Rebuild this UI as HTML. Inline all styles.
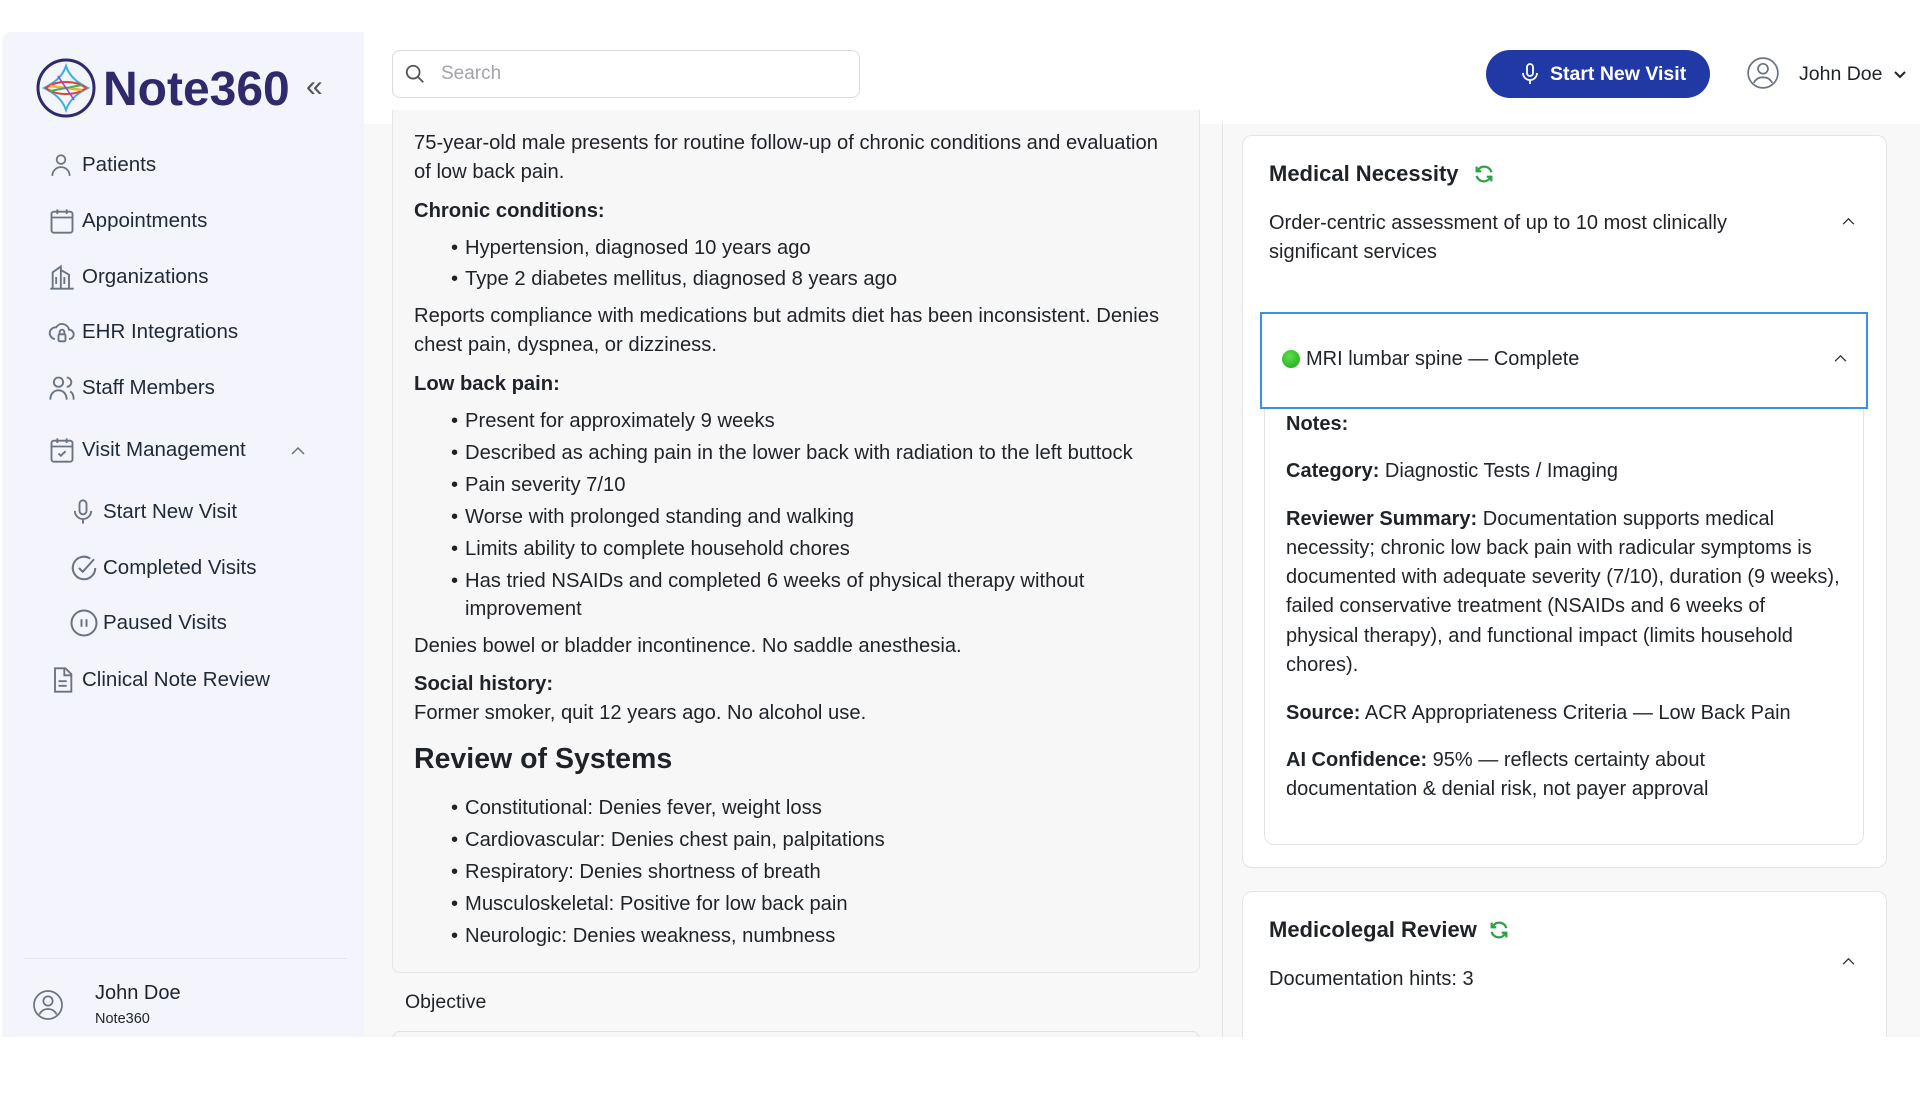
<!DOCTYPE html>
<html><head><meta charset="utf-8"><style>
*{box-sizing:border-box;margin:0;padding:0}
body{width:1920px;height:1098px;background:#fff;font-family:"Liberation Sans",sans-serif;color:#1f2328;position:relative;overflow:hidden}
.abs{position:absolute}
.side{left:2px;top:32px;width:362px;height:1005px;background:#f3f4fc;border-radius:10px 0 0 0}
.nav{position:absolute;font-size:20.5px;color:#1f2937;display:flex;align-items:center}
.nav svg{position:absolute;left:-34px}
.content{left:364px;top:122px;width:1556px;height:915px;background:#f8f8f9}
.mid{left:392px;top:110px;width:808px;height:863px;background:#f7f7f8;border:1px solid #e6e6e9;border-top:none;border-radius:0 0 8px 8px}
.t{position:absolute;font-size:20.2px;line-height:29px;white-space:nowrap}
.b{font-weight:bold}
.li{position:absolute;font-size:20.2px;white-space:nowrap;left:465px}
.li:before{content:"•";position:absolute;left:-14px}
.card{position:absolute;background:#fff;border:1px solid #e4e4e8;border-radius:10px}
.rt{position:absolute;font-size:20px;white-space:nowrap;left:1286px}
</style></head><body>
<div class="abs side"></div>
<div class="abs content"></div>
<div class="abs" style="left:364px;top:32px;width:1556px;height:92px;background:#fff"></div>
<svg class="abs" style="left:36px;top:58px" width="60" height="60" viewBox="0 0 60 60">
<circle cx="30" cy="30" r="28" fill="none" stroke="#2e2a6b" stroke-width="3"/>
<path d="M30 8 C34 20 44 26 52 30 C44 34 34 40 30 52 C26 40 16 34 8 30 C16 26 26 20 30 8Z" fill="none" stroke="#3ab0e0" stroke-width="2"/>
<path d="M10 30 C20 22 40 22 50 30 C40 38 20 38 10 30Z" fill="none" stroke="#e0403a" stroke-width="2"/>
<path d="M14 28 L46 32" stroke="#f0b030" stroke-width="2.5"/>
<path d="M14 33 L46 27" stroke="#40b060" stroke-width="2"/>
<path d="M22 18 C28 28 32 32 38 42" stroke="#a040c0" stroke-width="1.5" fill="none"/>
</svg>
<div class="abs" style="left:103px;top:62px;font-size:48px;font-weight:bold;color:#2e2a6b;letter-spacing:0px">Note360</div>
<div class="abs" style="left:306px;top:72px;font-size:30px;color:#555;line-height:30px">«</div>
<div class="nav" style="left:82px;top:153px">
<svg width="26" height="26" viewBox="0 0 24 24" fill="none" stroke="#6b7280" stroke-width="1.6"><circle cx="12" cy="7" r="4"/><path d="M4 22c0-5 4-8 8-8s8 3 8 8"/></svg>Patients</div>
<div class="nav" style="left:82px;top:209px">
<svg width="28" height="28" viewBox="0 0 24 24" fill="none" stroke="#6b7280" stroke-width="1.6"><rect x="3" y="4" width="18" height="18" rx="2"/><path d="M3 9h18M8 2v4M16 2v4"/></svg>Appointments</div>
<div class="nav" style="left:82px;top:265px">
<svg width="28" height="28" viewBox="0 0 24 24" fill="none" stroke="#6b7280" stroke-width="1.6"><path d="M4 22V8l7-5v19M11 22V6l7 4v12M2 22h20M7 12v6M14 12v6"/></svg>Organizations</div>
<div class="nav" style="left:82px;top:320px">
<svg width="28" height="28" viewBox="0 0 24 24" fill="none" stroke="#6b7280" stroke-width="1.6"><path d="M6 18a5 5 0 0 1 1-10 6 6 0 0 1 11 2 4 4 0 0 1 0 8"/><rect x="9" y="14" width="6" height="6" rx="1"/><path d="M10 14v-2a2 2 0 0 1 4 0v2"/></svg>EHR Integrations</div>
<div class="nav" style="left:82px;top:376px">
<svg width="28" height="28" viewBox="0 0 24 24" fill="none" stroke="#6b7280" stroke-width="1.6"><circle cx="9" cy="7" r="4"/><path d="M2 22c0-5 3-8 7-8s7 3 7 8M16 3a4 4 0 0 1 0 8M19 15c2 1 3 4 3 7"/></svg>Staff Members</div>
<div class="nav" style="left:82px;top:438px">
<svg width="28" height="28" viewBox="0 0 24 24" fill="none" stroke="#6b7280" stroke-width="1.6"><rect x="3" y="4" width="18" height="18" rx="2"/><path d="M3 9h18M8 2v4M16 2v4M9 15l2 2 4-4"/></svg>Visit Management</div>
<svg class="abs" style="left:291px;top:446px" width="14" height="10" viewBox="0 0 14 10" fill="none" stroke="#6b7280" stroke-width="1.5"><path d="M1 8l6-6 6 6"/></svg>
<div class="nav" style="left:103px;top:500px">
<svg width="28" height="28" viewBox="0 0 24 24" fill="none" stroke="#6b7280" stroke-width="1.6"><rect x="9" y="2" width="6" height="12" rx="3"/><path d="M5 11a7 7 0 0 0 14 0M12 18v4"/></svg>Start New Visit</div>
<div class="nav" style="left:103px;top:556px">
<svg width="30" height="30" viewBox="0 0 24 24" fill="none" stroke="#6b7280" stroke-width="1.6"><path d="M21 12a9 9 0 1 1-4-7.5"/><path d="M8 12l3 3 9-10"/></svg>Completed Visits</div>
<div class="nav" style="left:103px;top:611px">
<svg width="30" height="30" viewBox="0 0 24 24" fill="none" stroke="#6b7280" stroke-width="1.6"><circle cx="12" cy="12" r="10"/><path d="M10 9v6M14 9v6"/></svg>Paused Visits</div>
<div class="nav" style="left:82px;top:668px">
<svg width="28" height="28" viewBox="0 0 24 24" fill="none" stroke="#6b7280" stroke-width="1.6"><path d="M6 2h9l5 5v15H6z"/><path d="M14 2v6h6M9 13h7M9 17h7"/></svg>Clinical Note Review</div>
<div class="abs" style="left:24px;top:958px;width:323px;height:1px;background:#e4e5ee"></div>
<svg class="abs" style="left:32px;top:989px" width="32" height="32" viewBox="0 0 24 24" fill="none" stroke="#6b7280" stroke-width="1.3"><circle cx="12" cy="12" r="10.5"/><circle cx="12" cy="9" r="3.5"/><path d="M5.5 19c1.5-3 4-4 6.5-4s5 1 6.5 4"/></svg>
<div class="abs" style="left:95px;top:982px;font-size:20px">John Doe</div>
<div class="abs" style="left:95px;top:1011px;font-size:14.5px">Note360</div>
<div class="abs" style="left:392px;top:50px;width:468px;height:48px;border:1.5px solid #d8d9de;border-radius:8px;background:#fff"></div>
<svg class="abs" style="left:404px;top:63px" width="22" height="22" viewBox="0 0 24 24" fill="none" stroke="#555" stroke-width="2"><circle cx="10" cy="10" r="7"/><path d="M15 15l6 6"/></svg>
<div class="abs" style="left:441px;top:63px;font-size:19px;color:#a3a3a8">Search</div>
<div class="abs" style="left:1486px;top:50px;width:224px;height:48px;background:#2139a5;border-radius:24px;color:#fff;font-size:19.5px;font-weight:bold"><span style="position:absolute;left:64px;top:13px">Start New Visit</span>
<svg style="position:absolute;left:32px;top:11px" width="24" height="26" viewBox="0 0 24 24" fill="none" stroke="#fff" stroke-width="1.8"><rect x="9" y="2" width="6" height="12" rx="3"/><path d="M5 11a7 7 0 0 0 14 0M12 18v4"/></svg></div>
<svg class="abs" style="left:1746px;top:56px" width="34" height="34" viewBox="0 0 24 24" fill="none" stroke="#6b7280" stroke-width="1.2"><circle cx="12" cy="12" r="10.5"/><circle cx="12" cy="9" r="3.5"/><path d="M5.5 19c1.5-3 4-4 6.5-4s5 1 6.5 4"/></svg>
<div class="abs" style="left:1799px;top:63px;font-size:19.5px">John Doe</div>
<svg class="abs" style="left:1893px;top:70px" width="14" height="10" viewBox="0 0 14 10" fill="none" stroke="#222" stroke-width="2"><path d="M2 2l5 5 5-5"/></svg>
<div class="abs mid"></div>
<div class="t" style="left:414px;top:129px">75-year-old male presents for routine follow-up of chronic conditions and evaluation</div>
<div class="t" style="left:414px;top:158px">of low back pain.</div>
<div class="t b" style="left:414px;top:197px">Chronic conditions:</div>
<div class="li" style="top:237px">Hypertension, diagnosed 10 years ago</div>
<div class="li" style="top:268px">Type 2 diabetes mellitus, diagnosed 8 years ago</div>
<div class="t" style="left:414px;top:302px">Reports compliance with medications but admits diet has been inconsistent. Denies</div>
<div class="t" style="left:414px;top:331px">chest pain, dyspnea, or dizziness.</div>
<div class="t b" style="left:414px;top:370px">Low back pain:</div>
<div class="li" style="top:410px">Present for approximately 9 weeks</div>
<div class="li" style="top:442px">Described as aching pain in the lower back with radiation to the left buttock</div>
<div class="li" style="top:474px">Pain severity 7/10</div>
<div class="li" style="top:506px">Worse with prolonged standing and walking</div>
<div class="li" style="top:538px">Limits ability to complete household chores</div>
<div class="li" style="top:570px">Has tried NSAIDs and completed 6 weeks of physical therapy without</div>
<div class="t" style="left:465px;top:595px">improvement</div>
<div class="t" style="left:414px;top:632px">Denies bowel or bladder incontinence. No saddle anesthesia.</div>
<div class="t b" style="left:414px;top:670px">Social history:</div>
<div class="t" style="left:414px;top:699px">Former smoker, quit 12 years ago. No alcohol use.</div>
<div class="abs b" style="left:414px;top:743px;font-size:28.5px">Review of Systems</div>
<div class="li" style="top:797px">Constitutional: Denies fever, weight loss</div>
<div class="li" style="top:829px">Cardiovascular: Denies chest pain, palpitations</div>
<div class="li" style="top:861px">Respiratory: Denies shortness of breath</div>
<div class="li" style="top:893px">Musculoskeletal: Positive for low back pain</div>
<div class="li" style="top:925px">Neurologic: Denies weakness, numbness</div>
<div class="abs" style="left:405px;top:991px;font-size:19.5px">Objective</div>
<div class="abs" style="left:392px;top:1031px;width:808px;height:10px;border:1px solid #e0e0e3;border-radius:8px 8px 0 0;background:#f7f7f8"></div>
<div class="abs" style="left:1222px;top:122px;width:1px;height:915px;background:#e2e2e6"></div>
<div class="card" style="left:1242px;top:135px;width:645px;height:733px"></div>
<div class="abs b" style="left:1269px;top:161px;font-size:22px">Medical Necessity</div>
<svg class="abs" style="left:1473px;top:163px" width="22" height="22" viewBox="0 0 24 24" fill="none" stroke="#2ea043" stroke-width="2.4"><path d="M20 10a8 8 0 0 0-14-3L4 9M4 14a8 8 0 0 0 14 3l2-2"/><path d="M4 4v5h5M20 20v-5h-5"/></svg>
<div class="rt" style="left:1269px;top:212px">Order-centric assessment of up to 10 most clinically</div>
<div class="rt" style="left:1269px;top:241px">significant services</div>
<svg class="abs" style="left:1842px;top:217px" width="13" height="9" viewBox="0 0 14 10" fill="none" stroke="#333" stroke-width="1.5"><path d="M1 8l6-6 6 6"/></svg>
<div class="card" style="left:1264px;top:315px;width:600px;height:530px;border-radius:10px"></div>
<div class="abs" style="left:1260px;top:312px;width:608px;height:97px;border:2.5px solid #3d8fe2;background:#fff"></div>
<div class="abs" style="left:1282px;top:350px;width:18px;height:18px;border-radius:50%;background:radial-gradient(circle at 40% 35%,#5de04a,#1aa51a)"></div>
<div class="rt" style="left:1306px;top:348px">MRI lumbar spine — Complete</div>
<svg class="abs" style="left:1834px;top:354px" width="13" height="9" viewBox="0 0 14 10" fill="none" stroke="#333" stroke-width="1.5"><path d="M1 8l6-6 6 6"/></svg>
<div class="rt b" style="top:413px">Notes:</div>
<div class="rt" style="top:460px"><b>Category:</b> Diagnostic Tests / Imaging</div>
<div class="rt" style="top:508px"><b>Reviewer Summary:</b> Documentation supports medical</div>
<div class="rt" style="top:537px">necessity; chronic low back pain with radicular symptoms is</div>
<div class="rt" style="top:566px">documented with adequate severity (7/10), duration (9 weeks),</div>
<div class="rt" style="top:595px">failed conservative treatment (NSAIDs and 6 weeks of</div>
<div class="rt" style="top:625px">physical therapy), and functional impact (limits household</div>
<div class="rt" style="top:654px">chores).</div>
<div class="rt" style="top:702px"><b>Source:</b> ACR Appropriateness Criteria — Low Back Pain</div>
<div class="rt" style="top:749px"><b>AI Confidence:</b> 95% — reflects certainty about</div>
<div class="rt" style="top:778px">documentation &amp; denial risk, not payer approval</div>
<div class="card" style="left:1242px;top:891px;width:645px;height:160px;border-bottom:none"></div>
<div class="abs b" style="left:1269px;top:917px;font-size:22px">Medicolegal Review</div>
<svg class="abs" style="left:1488px;top:919px" width="22" height="22" viewBox="0 0 24 24" fill="none" stroke="#2ea043" stroke-width="2.4"><path d="M20 10a8 8 0 0 0-14-3L4 9M4 14a8 8 0 0 0 14 3l2-2"/><path d="M4 4v5h5M20 20v-5h-5"/></svg>
<div class="rt" style="left:1269px;top:968px">Documentation hints: 3</div>
<svg class="abs" style="left:1842px;top:957px" width="13" height="9" viewBox="0 0 14 10" fill="none" stroke="#333" stroke-width="1.5"><path d="M1 8l6-6 6 6"/></svg>
<div class="abs" style="left:0;top:1037px;width:1920px;height:61px;background:#fff"></div>
</body></html>
